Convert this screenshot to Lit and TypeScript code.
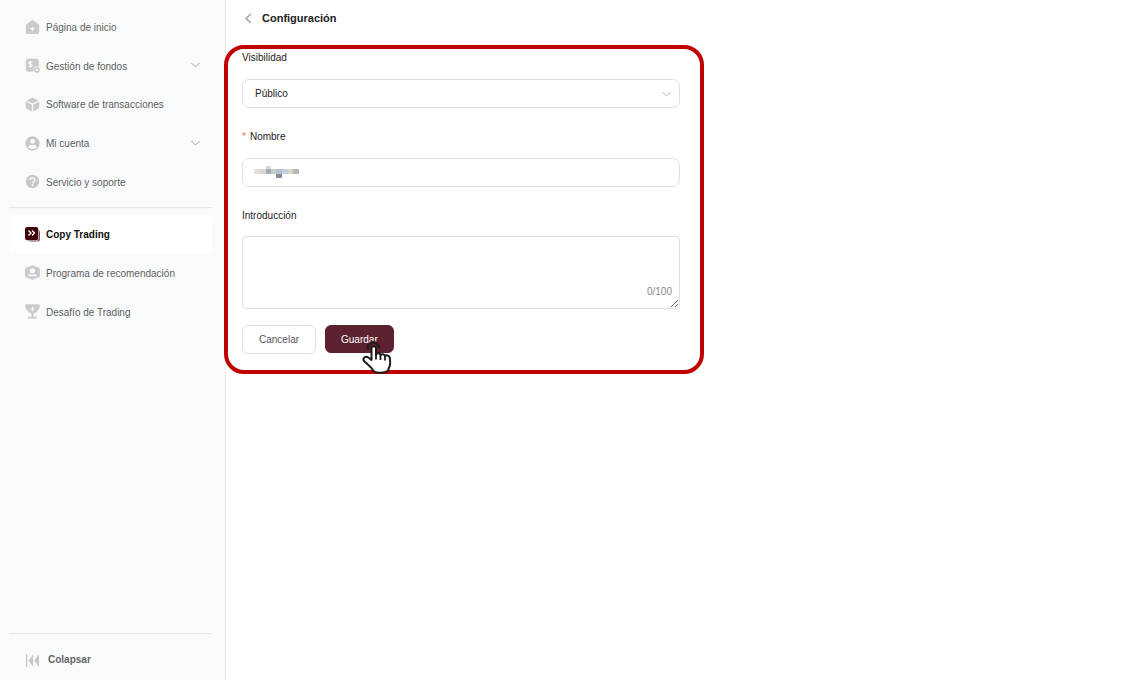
import { LitElement, html, css, svg } from "lit";
import { customElement, property, state } from "lit/decorators.js";
import { classMap } from "lit/directives/class-map.js";

const icons: Record<string, unknown> = {
  home: svg`<path fill="#cbcbcb" d="M6.4.5a1.8 1.8 0 0 1 2.200 0l4.900 3.700c.5.4.7.9.7 1.500v6.400a2 2 0 0 1-2 2H2.800a2 2 0 0 1-2-2V5.700c0-.6.2-1.100.7-1.500z"/><path stroke="#fff" stroke-width="1.200" d="M7.500 6.700v4M5.500 8.700h4"/>`,
  funds: svg`<rect x=".8" y=".8" width="13" height="13" rx="2.200" fill="#cbcbcb"/><path fill="none" stroke="#fff" stroke-width="1.100" d="M7 4.400c-.6-.7-3.200-.8-3.200.6 0 1.700 3.400.8 3.400 2.600 0 1.400-2.700 1.400-3.500.5M5.400 3v7"/><circle cx="11.800" cy="11.800" r="3.600" fill="#f9fafc"/><circle cx="11.800" cy="11.800" r="2.100" fill="none" stroke="#c8c8c8" stroke-width="1.600"/>`,
  cube: svg`<path fill="#cbcbcb" d="M7.500.4l6 3-6 3.100-6-3.100zM.8 4.600l6.100 3.100v6.900L1.600 11.800a1.500 1.500 0 0 1-.8-1.300zM14.200 4.600L8.100 7.700v6.900l5.300-2.800a1.500 1.500 0 0 0 .8-1.300z"/>`,
  account: svg`<circle cx="7.500" cy="7.500" r="7.200" fill="#c8c8c8"/><circle cx="7.500" cy="5.300" r="2.200" fill="#fff"/><path fill="#fff" d="M3.300 11.800c0-4.200 8.400-4.200 8.400 0q-4.200 1.700-8.400 0z"/>`,
  help: svg`<circle cx="7.500" cy="7.500" r="6.700" fill="#c8c8c8"/><path fill="none" stroke="#fff" stroke-width="1.300" d="M5.200 6.100c0-3.100 4.700-3 4.700-.2 0 1.600-2.300 1.600-2.300 3.300"/><circle cx="7.600" cy="11" r=".9" fill="#fff"/>`,
  copy: svg`<rect x="3" y="3" width="12" height="11.500" rx="2.300" fill="#7d5257"/><path d="M13.500 2v9.500a2 2 0 0 1-2 2H2" fill="none" stroke="#fff" stroke-width=".7"/><rect x="0" y="0" width="13.200" height="13.200" rx="2.200" fill="#3d0309"/><path fill="none" stroke="#fff" stroke-width="1.300" d="M3.500 3.500L6 6 3.500 8.500M7 3.500L9.500 6 7 8.500"/>`,
  referral: svg`<path fill="#cbcbcb" d="M6.700.4q.8-.4 1.600 0l5.700 2.300q.9.400.9 1.300v7q0 .9-.9 1.300l-5.700 2.300q-.8.400-1.600 0L1 12.300q-.9-.4-.9-1.300V4q0-.9.9-1.300z"/><circle cx="7.500" cy="5.800" r="2.500" fill="#fff"/><path fill="#fff" d="M3.300 11.300q0-1.800 1.800-2.100 2.400 1 4.800 0 1.800.3 1.800 2.100z"/>`,
  trophy: svg`<path fill="#cbcbcb" d="M1.500.3h12q1.500 0 1.400 1.500-.4 5-6.400 8v2.900h3.400v1.800H3.100v-1.800h3.400V9.800q-6-3-6.400-8Q0 .3 1.500.3z"/><path fill="none" stroke="#fff" stroke-width="1.100" d="M7.500 3v4M5.500 5h4"/>`,
  collapse: svg`<path fill="#c6c6c6" d="M1 1h1.300v13H1zM8.200 1.300v12.400L3.500 7.500zM14 1.300v12.400L9.300 7.500z"/>`,
};

@customElement("side-item")
class SideItem extends LitElement {
  @property() icon = "";
  @property() label = "";
  @property({ type: Boolean }) active = false;
  @property({ type: Boolean }) expandable = false;

  static styles = css`
    :host { display: block; }
    .item {
      box-sizing: border-box;
      display: flex;
      align-items: center;
      gap: 6px;
      height: 100%;
      padding: 0 11px 0 16px;
      border-radius: 5px;
      color: #5f5f5f;
      text-decoration: none;
    }
    .active { background: #fff; color: #111; font-weight: bold; }
    .label { flex: 1; padding-top: 2px; white-space: nowrap; }
    .icon, .chevron { flex: none; }
  `;

  render() {
    return html`<a class=${classMap({ item: true, active: this.active })} href="#">
      <svg class="icon" width="15" height="15" viewBox="0 0 15 15" aria-hidden="true">${icons[this.icon]}</svg>
      <span class="label">${this.label}</span>
      ${this.expandable
        ? html`<svg class="chevron" width="11" height="9" viewBox="0 0 11 9" aria-hidden="true">
            <path d="M1.500 2L5.500 6 9.500 2" fill="none" stroke="#a6a6a6" />
          </svg>`
        : ""}
    </a>`;
  }
}

@customElement("app-root")
class AppRoot extends LitElement {
  @state() private intro = "";

  static styles = css`
    :host {
      display: flex;
      min-height: 100vh;
      font: 10px/14px "Liberation Sans", Arial, sans-serif;
      color: #222;
      background: #fff;
    }
    * { box-sizing: border-box; }
    .sidebar {
      flex: none;
      width: 226px;
      display: flex;
      flex-direction: column;
      padding: 8px 13px 0 9px;
      background: #f9fafc;
      border-right: 1px solid #e9eaed;
    }
    .group { display: grid; grid-auto-rows: 1fr; }
    .primary { height: 193px; margin-bottom: 6px; }
    .secondary { height: 116px; margin-top: 7px; }
    .rule { height: 1px; margin: 0; border: 0; background: #e6e7ec; }
    .footer { margin-top: auto; }
    .collapse {
      display: flex;
      align-items: center;
      gap: 8px;
      width: 100%;
      height: 46px;
      padding: 6px 16px 0;
      border: 0;
      background: none;
      font: inherit;
      font-weight: bold;
      color: #666;
    }
    .main { flex: 1; min-width: 0; padding: 10px 16px; }
    .header { display: flex; align-items: center; gap: 7px; height: 17px; }
    .back { display: flex; padding: 0; border: 0; background: none; }
    .title { margin: 0; font-size: 11px; line-height: 17px; }
    .form {
      position: relative;
      max-width: 438px;
      margin-top: 23px;
    }
    .form::after {
      content: "";
      position: absolute;
      inset: -5px -24px -20px -18px;
      border: 4px solid #c00000;
      border-radius: 20px;
      pointer-events: none;
    }
    .field { display: grid; gap: 14px; margin-bottom: 21px; }
    .label { height: 15px; line-height: 15px; }
    .required { color: #f56c6c; margin-right: 4px; }
    .control { position: relative; display: flex; }
    .box {
      width: 100%;
      height: 29px;
      padding: 0 12px;
      border: 1px solid #e0e1e8;
      border-radius: 7px;
      background: #fff;
      font: inherit;
      color: #222;
      appearance: none;
      outline: none;
    }
    .area { height: 73px; border-radius: 4px; padding: 8px 12px; resize: vertical; }
    .last { gap: 13px; margin-bottom: 16px; }
    .arrow { position: absolute; right: 8px; top: 11px; pointer-events: none; }
    .mosaic { position: absolute; left: 12px; top: 7px; pointer-events: none; }
    .count { position: absolute; right: 8px; bottom: 10px; color: #85878c; line-height: 14px; }
    .actions { display: flex; align-items: flex-start; gap: 9px; }
    .button {
      height: 29px;
      padding: 0 16px;
      border: 1px solid #e0e1e8;
      border-radius: 6px;
      background: #fff;
      font: inherit;
      color: #555;
    }
    .save {
      position: relative;
      height: 28px;
      padding: 1px 15px 0;
      border-color: #5c2230;
      background: #5c2230;
      color: #fff;
    }
    .pointer { position: absolute; z-index: 1; left: 34px; top: 13px; }
  `;

  private onIntro(event: Event) {
    this.intro = (event.target as HTMLTextAreaElement).value;
  }

  render() {
    return html`
      <aside class="sidebar">
        <nav class="group primary">
          <side-item icon="home" label="Página de inicio"></side-item>
          <side-item icon="funds" label="Gestión de fondos" expandable></side-item>
          <side-item icon="cube" label="Software de transacciones"></side-item>
          <side-item icon="account" label="Mi cuenta" expandable></side-item>
          <side-item icon="help" label="Servicio y soporte"></side-item>
        </nav>
        <hr class="rule" />
        <nav class="group secondary">
          <side-item icon="copy" label="Copy Trading" active></side-item>
          <side-item icon="referral" label="Programa de recomendación"></side-item>
          <side-item icon="trophy" label="Desafío de Trading"></side-item>
        </nav>
        <div class="footer">
          <hr class="rule" />
          <button class="collapse" type="button">
            <svg width="15" height="15" viewBox="0 0 15 15" aria-hidden="true">${icons.collapse}</svg>
            Colapsar
          </button>
        </div>
      </aside>
      <main class="main">
        <header class="header">
          <button class="back" type="button" aria-label="Volver">
            <svg width="13" height="13" viewBox="0 0 13 13"><path d="M9 2L4 6.500 9 11" fill="none" stroke="#999" stroke-width="1.200" /></svg>
          </button>
          <h1 class="title">Configuración</h1>
        </header>
        <form class="form" @submit=${(e: Event) => e.preventDefault()}>
          <div class="field">
            <label class="label" for="visibility">Visibilidad</label>
            <div class="control">
              <select class="box" id="visibility"><option>Público</option></select>
              <svg class="arrow" width="11" height="9" viewBox="0 0 11 9" aria-hidden="true">
                <path d="M1.500 2L5.500 6 9.500 2" fill="none" stroke="#b4b7bf" />
              </svg>
            </div>
          </div>
          <div class="field">
            <label class="label" for="name"><span class="required">*</span>Nombre</label>
            <div class="control">
              <input class="box" id="name" type="text" />
              <svg class="mosaic" width="46" height="14" viewBox="0 0 46 14" shape-rendering="crispEdges" aria-hidden="true">
                <path fill="#eadedd" d="M0 4h6v5H0z" /><path fill="#d7d8da" d="M6 4h6v5H6zM12 1h5v3h-5z" />
                <path fill="#a9abb0" d="M12 4h5v5h-5z" /><path fill="#c9c9ca" d="M17 4h5v5h-5z" />
                <path fill="#b0c3cc" d="M22 4h6v5h-6z" /><path fill="#8b8b9d" d="M22 9h6v4h-6z" />
                <path fill="#c1cfdd" d="M28 4h6v5h-6z" /><path fill="#dbd4cb" d="M34 4h5v5h-5z" />
                <path fill="#b6b8bc" d="M39 4h6v5h-6z" />
              </svg>
            </div>
          </div>
          <div class="field last">
            <label class="label" for="intro">Introducción</label>
            <div class="control">
              <textarea class="box area" id="intro" maxlength="100" @input=${this.onIntro}></textarea>
              <span class="count">${this.intro.length}/100</span>
            </div>
          </div>
          <div class="actions">
            <button class="button" type="button">Cancelar</button>
            <button class="button save" type="submit">
              Guardar
              <svg class="pointer" width="34" height="36" viewBox="0 0 34 36" aria-hidden="true">
                <path d="M8 10.500A5.600 5.600 0 1 1 19 9" fill="none" stroke="#2b171c" stroke-width="2.600" />
                <path d="M11.500 9.500c0-3 4.500-3 4.500 0v6c.6-2 4.300-1.700 4.500.6.700-1.500 4.200-1.200 4.500 1 .8-1.500 4.600-.8 4.800 1.700.4 3 .6 5 .2 7-.5 2.600-1.600 3.700-2 6-3.500 2.700-11 2.700-14.500.2-1.700-3.500-4.500-5.500-9-9.500-2.800-3 .8-6 3.800-4l3.200 2.500z" fill="#fff" stroke="#1b1b1b" stroke-width="2" stroke-linejoin="round" />
                <path d="M16 14.500v6M20.500 16v5M25 17v4.500" fill="none" stroke="#1b1b1b" stroke-width="1.800" />
              </svg>
            </button>
          </div>
        </form>
      </main>
    `;
  }
}
